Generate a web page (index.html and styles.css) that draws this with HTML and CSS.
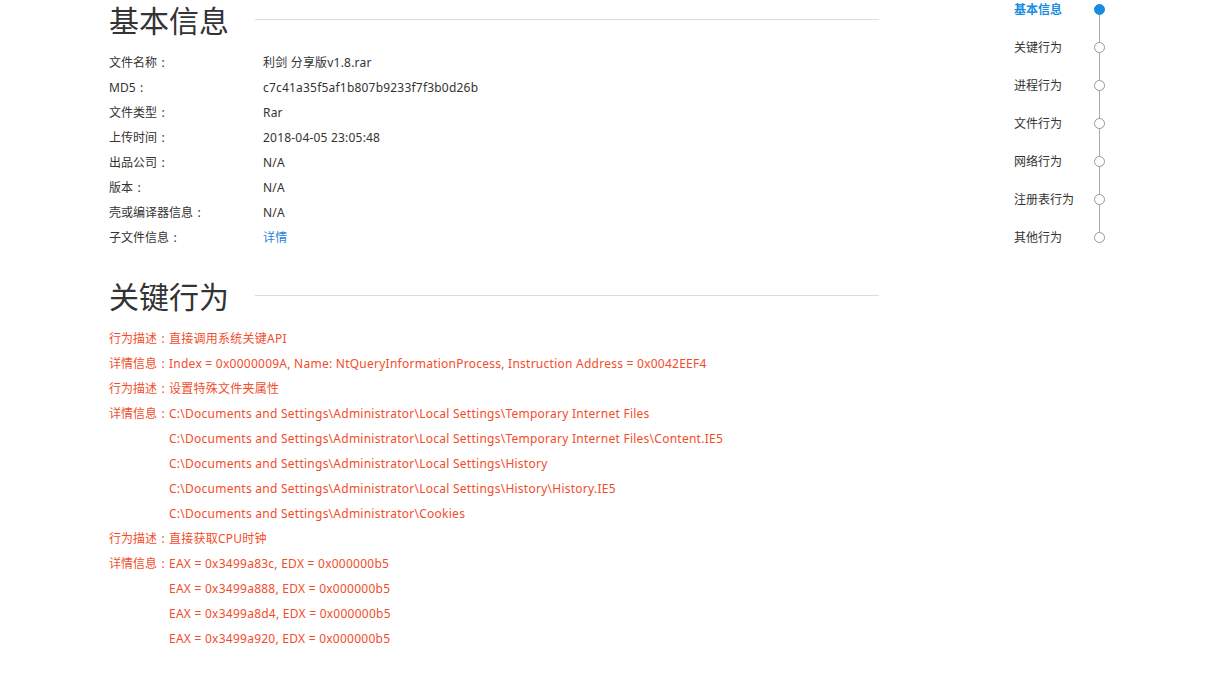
FILE: index.html
```html
<!DOCTYPE html>
<html lang="zh-CN">

<head>
    <meta charset="UTF-8">
    <title>文件分析报告</title>
    <link rel="stylesheet" href="styles.css">
</head>

<body>
    <div class="page">
        <div class="report">
            <div class="section-title">
                <h2>基本信息</h2>
                <span class="rule"></span>
            </div>
            <div class="info-list">
                <div class="info-row"><span class="info-label">文件名称<span class="colon">:</span></span><span>利剑 分享版v1.8.rar</span></div>
                <div class="info-row"><span class="info-label">MD5<span class="colon">:</span></span><span>c7c41a35f5af1b807b9233f7f3b0d26b</span></div>
                <div class="info-row"><span class="info-label">文件类型<span class="colon">:</span></span><span>Rar</span></div>
                <div class="info-row"><span class="info-label">上传时间<span class="colon">:</span></span><span>2018-04-05 23:05:48</span></div>
                <div class="info-row"><span class="info-label">出品公司<span class="colon">:</span></span><span>N/A</span></div>
                <div class="info-row"><span class="info-label">版本<span class="colon">:</span></span><span>N/A</span></div>
                <div class="info-row"><span class="info-label">壳或编译器信息<span class="colon">:</span></span><span>N/A</span></div>
                <div class="info-row"><span class="info-label">子文件信息<span class="colon">:</span></span><a href="#" class="link">详情</a></div>
            </div>

            <div class="section-title section-gap">
                <h2>关键行为</h2>
                <span class="rule"></span>
            </div>
            <div class="behavior-list">
                <div class="behavior-row">
                    <span class="behavior-label">行为描述<span class="colon">:</span></span>
                    <div class="behavior-value"><div>直接调用系统关键API</div></div>
                </div>
                <div class="behavior-row">
                    <span class="behavior-label">详情信息<span class="colon">:</span></span>
                    <div class="behavior-value"><div>Index = 0x0000009A, Name: NtQueryInformationProcess, Instruction Address = 0x0042EEF4</div></div>
                </div>
                <div class="behavior-row">
                    <span class="behavior-label">行为描述<span class="colon">:</span></span>
                    <div class="behavior-value"><div>设置特殊文件夹属性</div></div>
                </div>
                <div class="behavior-row">
                    <span class="behavior-label">详情信息<span class="colon">:</span></span>
                    <div class="behavior-value">
                        <div>C:\Documents and Settings\Administrator\Local Settings\Temporary Internet Files</div>
                        <div>C:\Documents and Settings\Administrator\Local Settings\Temporary Internet Files\Content.IE5</div>
                        <div>C:\Documents and Settings\Administrator\Local Settings\History</div>
                        <div>C:\Documents and Settings\Administrator\Local Settings\History\History.IE5</div>
                        <div>C:\Documents and Settings\Administrator\Cookies</div>
                    </div>
                </div>
                <div class="behavior-row">
                    <span class="behavior-label">行为描述<span class="colon">:</span></span>
                    <div class="behavior-value"><div>直接获取CPU时钟</div></div>
                </div>
                <div class="behavior-row">
                    <span class="behavior-label">详情信息<span class="colon">:</span></span>
                    <div class="behavior-value">
                        <div>EAX = 0x3499a83c, EDX = 0x000000b5</div>
                        <div>EAX = 0x3499a888, EDX = 0x000000b5</div>
                        <div>EAX = 0x3499a8d4, EDX = 0x000000b5</div>
                        <div>EAX = 0x3499a920, EDX = 0x000000b5</div>
                    </div>
                </div>
            </div>
        </div>

        <ul class="side-nav">
            <li class="active"><span class="nav-text">基本信息</span><span class="dot"></span></li>
            <li><span class="nav-text">关键行为</span><span class="dot"></span></li>
            <li><span class="nav-text">进程行为</span><span class="dot"></span></li>
            <li><span class="nav-text">文件行为</span><span class="dot"></span></li>
            <li><span class="nav-text">网络行为</span><span class="dot"></span></li>
            <li><span class="nav-text">注册表行为</span><span class="dot"></span></li>
            <li><span class="nav-text">其他行为</span><span class="dot"></span></li>
        </ul>
    </div>
</body>

</html>
```

FILE: styles.css
```css
body {
    margin: 0;
    padding: 0;
    background: #fff;
    color: #333;
    font-family: "Noto Sans", "Noto Sans CJK SC", sans-serif;
    font-size: 12px;
}

.page {
    display: flex;
    align-items: flex-start;
    padding-left: 109px;
}

.report {
    width: 770px;
}

.section-title {
    display: flex;
    align-items: center;
    height: 38px;
}

.section-title h2 {
    margin: 0;
    font-size: 30px;
    font-weight: normal;
    line-height: 36px;
    color: #333;
    font-family: "Noto Sans CJK SC", sans-serif;
}

.section-title .rule {
    flex: 1;
    height: 1px;
    margin-left: 26px;
    background: #dcdcdc;
}

.section-gap {
    margin-top: 26px;
}

.colon {
    display: inline-block;
    width: 12px;
    text-align: center;
}

.info-list {
    margin-top: 12px;
}

.info-row {
    display: flex;
    height: 25px;
    line-height: 25px;
    letter-spacing: 0.2px;
}

.info-label {
    width: 154px;
    flex-shrink: 0;
    letter-spacing: 0;
    white-space: nowrap;
}

.link {
    color: #2a82d8;
    text-decoration: none;
}

.behavior-list {
    margin-top: 12px;
    color: #f24d2b;
}

.behavior-row {
    display: flex;
    line-height: 25px;
}

.behavior-label {
    width: 60px;
    flex-shrink: 0;
    white-space: nowrap;
}

.behavior-value {
    letter-spacing: 0.25px;
}

.side-nav {
    list-style: none;
    margin: 0 0 0 135px;
    padding: 0;
    position: relative;
    display: flex;
    flex-direction: column;
    gap: 20px;
}

.side-nav::before {
    content: "";
    position: absolute;
    left: 85px;
    top: 9px;
    bottom: 9px;
    width: 1px;
    background: #aaa;
}

.side-nav li {
    display: flex;
    align-items: center;
    height: 18px;
    color: #333;
}

.nav-text {
    width: 80px;
}

.dot {
    position: relative;
    width: 9px;
    height: 9px;
    border: 1px solid #999;
    border-radius: 50%;
    background: #fff;
}

.side-nav li.active {
    color: #1a8ce0;
    font-weight: bold;
}

.side-nav li.active .dot {
    background: #1a8ce0;
    border-color: #1a8ce0;
}
```
